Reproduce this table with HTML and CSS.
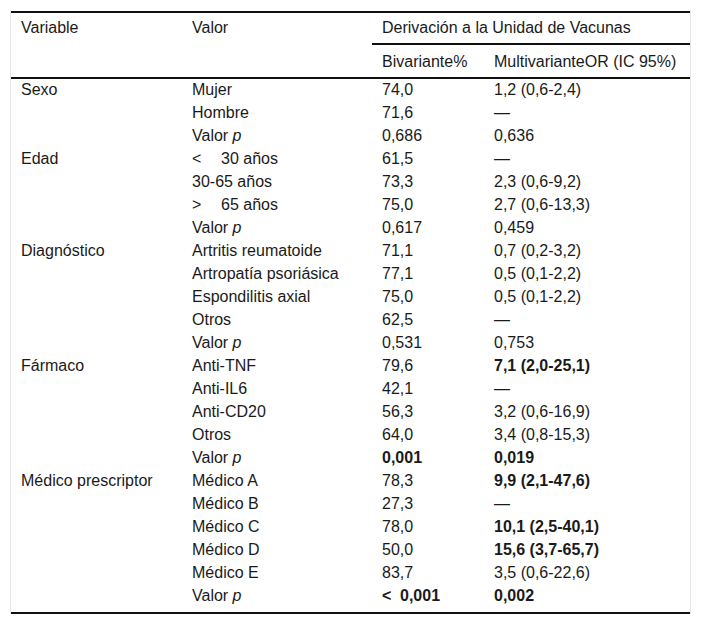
FILE: index.html
```html
<!DOCTYPE html>
<html lang="es">
<head>
<meta charset="utf-8">
<title>Tabla</title>
<link rel="stylesheet" href="styles.css">
</head>
<body>
<div class="wrap">
<table class="t">
<colgroup><col class="c1"><col class="c2"><col class="c3"><col class="c4"></colgroup>
<thead>
<tr class="h1"><th rowspan="2" class="span">Variable</th><th rowspan="2" class="span">Valor</th><th colspan="2" class="group">Derivación a la Unidad de Vacunas</th></tr>
<tr class="h2"><th>Bivariante%</th><th>MultivarianteOR (IC 95%)</th></tr>
</thead>
<tbody>
<tr><td>Sexo</td><td>Mujer</td><td>74,0</td><td>1,2 (0,6-2,4)</td></tr>
<tr><td></td><td>Hombre</td><td>71,6</td><td>—</td></tr>
<tr><td></td><td>Valor <i>p</i></td><td>0,686</td><td>0,636</td></tr>
<tr><td>Edad</td><td><span class="op">&lt;</span>30 años</td><td>61,5</td><td>—</td></tr>
<tr><td></td><td>30-65 años</td><td>73,3</td><td>2,3 (0,6-9,2)</td></tr>
<tr><td></td><td><span class="op">&gt;</span>65 años</td><td>75,0</td><td>2,7 (0,6-13,3)</td></tr>
<tr><td></td><td>Valor <i>p</i></td><td>0,617</td><td>0,459</td></tr>
<tr><td>Diagnóstico</td><td>Artritis reumatoide</td><td>71,1</td><td>0,7 (0,2-3,2)</td></tr>
<tr><td></td><td>Artropatía psoriásica</td><td>77,1</td><td>0,5 (0,1-2,2)</td></tr>
<tr><td></td><td>Espondilitis axial</td><td>75,0</td><td>0,5 (0,1-2,2)</td></tr>
<tr><td></td><td>Otros</td><td>62,5</td><td>—</td></tr>
<tr><td></td><td>Valor <i>p</i></td><td>0,531</td><td>0,753</td></tr>
<tr><td>Fármaco</td><td>Anti-TNF</td><td>79,6</td><td><b>7,1 (2,0-25,1)</b></td></tr>
<tr><td></td><td>Anti-IL6</td><td>42,1</td><td>—</td></tr>
<tr><td></td><td>Anti-CD20</td><td>56,3</td><td>3,2 (0,6-16,9)</td></tr>
<tr><td></td><td>Otros</td><td>64,0</td><td>3,4 (0,8-15,3)</td></tr>
<tr><td></td><td>Valor <i>p</i></td><td><b>0,001</b></td><td><b>0,019</b></td></tr>
<tr><td>Médico prescriptor</td><td>Médico A</td><td>78,3</td><td><b>9,9 (2,1-47,6)</b></td></tr>
<tr><td></td><td>Médico B</td><td>27,3</td><td>—</td></tr>
<tr><td></td><td>Médico C</td><td>78,0</td><td><b>10,1 (2,5-40,1)</b></td></tr>
<tr><td></td><td>Médico D</td><td>50,0</td><td><b>15,6 (3,7-65,7)</b></td></tr>
<tr><td></td><td>Médico E</td><td>83,7</td><td>3,5 (0,6-22,6)</td></tr>
<tr class="last"><td></td><td>Valor <i>p</i></td><td><b><span class="op op-b">&lt;</span>0,001</b></td><td><b>0,002</b></td></tr>
</tbody>
</table>
</div>
</body>
</html>
```

FILE: styles.css
```css
html, body {
  margin: 0;
  padding: 0;
  background: #fff;
}
body {
  font-family: "Liberation Sans", Arial, sans-serif;
  font-size: 16px;
  color: #1a1a1a;
}
.wrap {
  margin: 10px 0 0 10px;
  width: 679px;
  padding-top: 1px;
  border-left: 1px solid #e4e4e4;
  border-right: 1px solid #e4e4e4;
}
.t {
  width: 679px;
  border-collapse: separate;
  border-spacing: 0;
  table-layout: fixed;
  border-top: 2px solid #111;
  border-bottom: 2px solid #111;
}
.c1 { width: 171px; }
.c2 { width: 190px; }
.c3 { width: 112px; }
.c4 { width: 206px; }
th {
  font-weight: normal;
  text-align: left;
  line-height: 20px;
  vertical-align: top;
  padding: 5px 10px;
}
th.span {
  border-bottom: 2px solid #111;
}
th.group {
  border-bottom: 2px solid #111;
}
.h2 th {
  padding: 7px 10px 5px;
  border-bottom: 2px solid #111;
}
td {
  padding: 1px 10px 3px;
  line-height: 19px;
  vertical-align: top;
  white-space: nowrap;
}
tr.last td {
  padding-bottom: 7px;
}
.op {
  display: inline-block;
  width: 29px;
}
.op.op-b {
  width: 18px;
}
b { font-weight: bold; }
```
